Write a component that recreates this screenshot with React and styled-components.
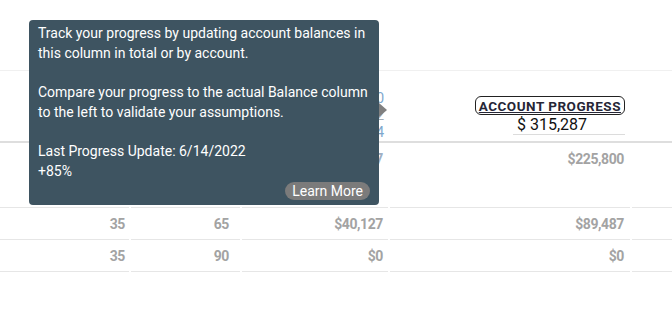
import React from "react";
import styled, { createGlobalStyle } from "styled-components";

const Global = createGlobalStyle`
  body {
    margin: 0;
    background: #fff;
    font-family: Roboto, "Liberation Sans", sans-serif;
    overflow: hidden;
  }
`;

const Page = styled.div`
  position: relative;
  width: 672px;
  height: 321px;
  padding-top: 70px;
  box-sizing: border-box;
  overflow: hidden;
`;

const cols = "129px 109px 146px 240px 1fr";

const HeadRow = styled.div`
  display: grid;
  grid-template-columns: ${cols};
  column-gap: 2px;
  height: 70px;
  border-top: 1px solid #f0f0f0;
  border-bottom: 2px solid #dedede;
`;

const Row = styled.div`
  display: grid;
  grid-template-columns: ${cols};
  column-gap: 2px;
`;

const Cell = styled.div`
  height: ${(p) => p.$h}px;
  border-bottom: 1px solid #e6e6e6;
  display: flex;
  justify-content: flex-end;
  align-items: ${(p) => (p.$top ? "flex-start" : "center")};
  padding: ${(p) => (p.$top ? "8px" : "0")} ${(p) => p.$pad || 5}px 0 0;
  box-sizing: border-box;
  font-size: 14px;
  font-weight: 700;
  letter-spacing: -0.4px;
  color: ${(p) => p.$color || "#a3a3a3"};
`;

const HeadCell = styled.div`
  display: flex;
  flex-direction: column;
  align-items: flex-end;
  padding: ${(p) => p.$top || 0}px ${(p) => p.$pad || 5}px 0 0;
`;

const Stack = styled.div`
  font-size: 14px;
  line-height: 17px;
  color: ${(p) => p.$color};
`;

const ProgressLabel = styled.div`
  border: 1px solid #222;
  border-radius: 6px;
  padding: 1px 3px 0;
  height: 19px;
  box-sizing: border-box;
  font-size: 13.5px;
  font-weight: 700;
  letter-spacing: 0.5px;
  line-height: 16px;
  color: #262636;
  text-decoration: underline;
  text-underline-offset: 1px;
`;

const ProgressInput = styled.div`
  width: 112px;
  box-sizing: border-box;
  padding: 0 0 0 4px;
  margin-top: 1px;
  border-bottom: 1px solid #dcdcdc;
  font-size: 16px;
  line-height: 18px;
  color: #111;
`;

const Tooltip = styled.div`
  position: absolute;
  left: 29px;
  top: 20px;
  width: 350px;
  height: 185px;
  box-sizing: border-box;
  padding: 4px 9px 5px;
  background: #3e5461;
  border-radius: 4px;
  color: #fff;
  font-size: 14px;
  line-height: 19.7px;
  white-space: nowrap;
  display: flex;
  flex-direction: column;
`;

const Arrow = styled.div`
  position: absolute;
  right: -8px;
  top: 83px;
  width: 0;
  height: 0;
  border-top: 7px solid transparent;
  border-bottom: 7px solid transparent;
  border-left: 8px solid #808080;
`;

const Actions = styled.div`
  display: flex;
  justify-content: flex-end;
  margin-top: auto;
`;

const LearnMore = styled.button`
  height: 18px;
  padding: 0 7px;
  border: none;
  border-radius: 9px;
  background: #7b7b7b;
  color: #fff;
  font-family: inherit;
  font-size: 14px;
  line-height: 18px;
`;

const rows = [
  { h: 65, top: true, vals: ["", "", "$287", "$225,800"] },
  { h: 32, vals: ["35", "65", "$40,127", "$89,487"] },
  { h: 32, vals: ["35", "90", "$0", "$0"] },
];

const pads = [4, 11, 5, 6];

export default function App() {
  return (
    <Page>
      <Global />
      <HeadRow>
        <HeadCell />
        <HeadCell />
        <HeadCell $top={19} $pad={4}>
          <Stack $color="#7ea7cd">0</Stack>
          <Stack $color="#a4acb4">2</Stack>
          <Stack $color="#7ea7cd">4</Stack>
        </HeadCell>
        <HeadCell $top={25} $pad={5}>
          <ProgressLabel>ACCOUNT PROGRESS</ProgressLabel>
          <ProgressInput>$ 315,287</ProgressInput>
        </HeadCell>
        <HeadCell />
      </HeadRow>
      {rows.map((r, i) => (
        <Row key={i}>
          {r.vals.map((v, j) => (
            <Cell
              key={j}
              $h={r.h}
              $top={r.top}
              $pad={pads[j]}
              $color={i === 0 && j === 2 ? "#9fb0c4" : undefined}
            >
              {v}
            </Cell>
          ))}
          <Cell $h={r.h} />
        </Row>
      ))}
      <Tooltip>
        <div>
          Track your progress by updating account balances in
          <br />
          this column in total or by account.
          <br />
          <br />
          Compare your progress to the actual Balance column
          <br />
          to the left to validate your assumptions.
          <br />
          <br />
          Last Progress Update: 6/14/2022
          <br />
          +85%
        </div>
        <Actions>
          <LearnMore>Learn More</LearnMore>
        </Actions>
        <Arrow />
      </Tooltip>
    </Page>
  );
}
